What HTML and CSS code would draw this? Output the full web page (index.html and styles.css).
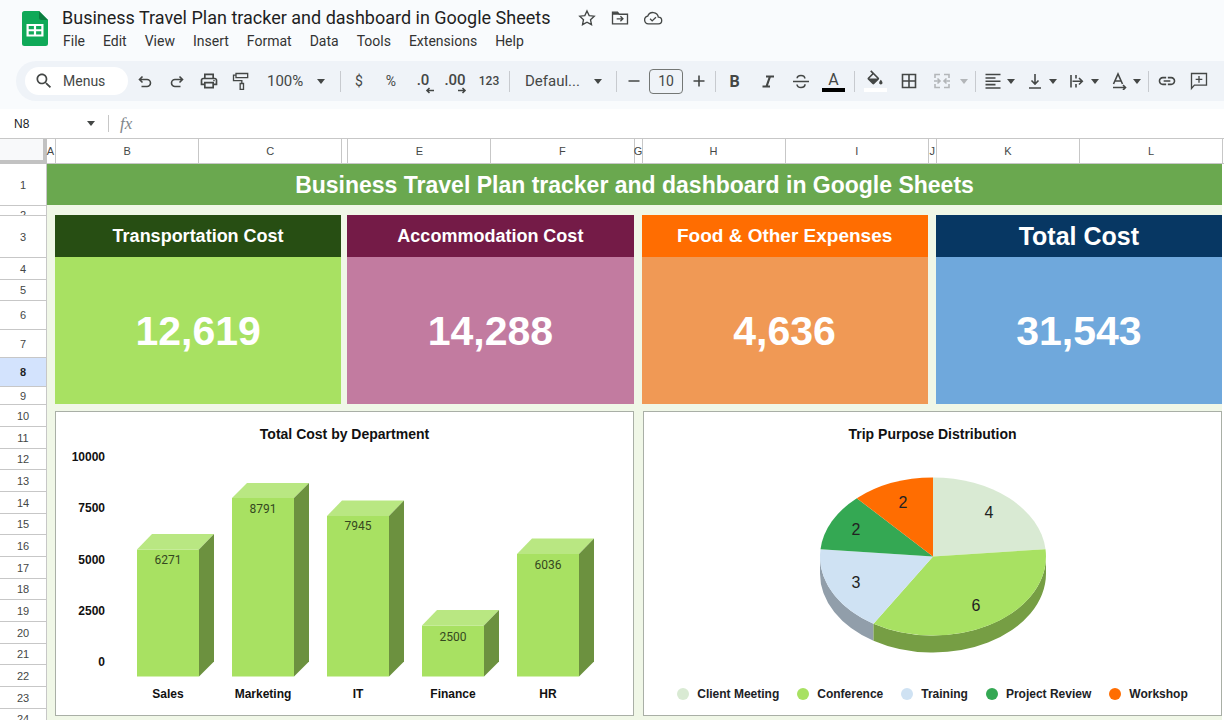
FILE: index.html
```html
<!DOCTYPE html>
<html lang="en">
<head>
<meta charset="utf-8">
<title>Business Travel Plan tracker and dashboard in Google Sheets</title>
<link rel="stylesheet" href="styles.css">
</head>
<body>
<header class="app-header">
  <svg class="logo" viewBox="0 0 26 35" aria-label="Sheets"><path fill="#0fa958" d="M2.500 0H17L26 9v23.500A2.500 2.500 0 0 1 23.500 35h-21A2.500 2.500 0 0 1 0 32.500v-30A2.500 2.500 0 0 1 2.500 0z"/><path fill="#0b7d3f" d="M17 0l9 9h-6.500A2.500 2.500 0 0 1 17 6.500z"/><path fill="#fff" fill-rule="evenodd" d="M4.500 13h17v12.500h-17zM6.700 15v3.200h5.200V15zm7.400 0v3.200h5.200V15zm-7.400 5.300v3.200h5.200v-3.200zm7.400 0v3.200h5.200v-3.200z"/></svg>
  <div class="heading">
    <div class="title-row">
      <h1 class="doc-title">Business Travel Plan tracker and dashboard in Google Sheets</h1>
      <button class="title-btn" aria-label="Star"><svg class="icon" viewBox="0 0 24 24"><path class="line" d="M12 3.500l2.600 5.600 6.100.700-4.500 4.200 1.200 6L12 17l-5.400 3 1.200-6-4.500-4.200 6.100-.700z"/></svg></button>
      <button class="title-btn" aria-label="Move"><svg class="icon" viewBox="0 0 24 24"><path class="line" d="M3 5h6l2 2.500h10V19H3zM8 13h7M12.500 10l3 3-3 3"/><path d="M3 5h6l2 3H3z"/></svg></button>
      <button class="title-btn" aria-label="Cloud status"><svg class="icon" viewBox="0 0 24 24"><path class="line" d="M6.500 19A4.700 4.700 0 0 1 5.700 9.700 6.600 6.600 0 0 1 18.400 11 4 4 0 0 1 18.500 19zM8.500 13l2.500 2.500 4.500-4.500"/></svg></button>
    </div>
    <nav class="menu">
      <button>File</button><button>Edit</button><button>View</button><button>Insert</button><button>Format</button><button>Data</button><button>Tools</button><button>Extensions</button><button>Help</button>
    </nav>
  </div>
</header>

<div class="toolbar" role="toolbar">
  <button class="menus"><svg class="icon" viewBox="0 0 24 24"><path d="M15.500 14h-.790l-.280-.270C15.410 12.590 16 11.110 16 9.500 16 5.910 13.090 3 9.500 3S3 5.910 3 9.500 5.910 16 9.500 16c1.610 0 3.090-.590 4.230-1.570l.270.280v.790l5 4.990L20.490 19l-4.990-5zm-6 0C7.010 14 5 11.990 5 9.500S7.010 5 9.500 5 14 7.010 14 9.500 11.990 14 9.500 14z"/></svg>Menus</button>
  <button class="tool" aria-label="Undo"><svg class="icon small" viewBox="0 0 18 18"><path class="line" d="M6.500 4.500L3.500 7.500l3 3M4 7.500H11a3.500 3.500 0 0 1 0 7H5.500"/></svg></button>
  <button class="tool" aria-label="Redo"><svg class="icon small" viewBox="0 0 18 18"><path class="line" d="M11.500 4.500l3 3-3 3M14 7.500H7a3.500 3.500 0 0 0 0 7h5.500"/></svg></button>
  <button class="tool" aria-label="Print"><svg class="icon" viewBox="0 0 24 24"><path d="M19 8h-1V3H6v5H5c-1.660 0-3 1.340-3 3v6h4v4h12v-4h4v-6c0-1.660-1.340-3-3-3zM8 5h8v3H8V5zm8 12v2H8v-4h8v2zm2-2v-2H6v2H4v-4c0-.550.450-1 1-1h14c.550 0 1 .450 1 1v4h-2z"/><circle cx="18" cy="11.500" r="1"/></svg></button>
  <button class="tool" aria-label="Paint format"><svg class="icon" viewBox="0 0 24 24"><path class="line" d="M6 3h14v5H6zM6 5H3v6.500h10V15M11 15h4v7h-4z"/></svg></button>
  <button class="drop zoom">100%<i class="caret"></i></button>
  <span class="sep"></span>
  <button class="tool symbol">$</button>
  <button class="tool symbol">%</button>
  <button class="tool decimal" aria-label="Decrease decimal places">.0<svg viewBox="0 0 10 6"><path class="line" d="M9 3H2M4.500.500L2 3l2.500 2.500"/></svg></button>
  <button class="tool decimal" aria-label="Increase decimal places">.00<svg viewBox="0 0 10 6"><path class="line" d="M1 3h7M5.500.500L8 3 5.500 5.500"/></svg></button>
  <button class="tool formats">123</button>
  <span class="sep"></span>
  <button class="drop font">Defaul...<i class="caret"></i></button>
  <span class="sep"></span>
  <button class="step" aria-label="Decrease font size"><svg class="icon small" viewBox="0 0 18 18"><path class="line" d="M3.500 9h11"/></svg></button>
  <input class="size" aria-label="Font size" value="10">
  <button class="step" aria-label="Increase font size"><svg class="icon small" viewBox="0 0 18 18"><path class="line" d="M3.500 9h11M9 3.500v11"/></svg></button>
  <span class="sep"></span>
  <button class="tool style bold">B</button>
  <button class="tool style" aria-label="Italic"><svg class="icon small" viewBox="0 0 18 18"><path class="heavy" d="M7 4.500h8M3.500 14.500h7.500M11 4.500L7.500 14.500"/></svg></button>
  <button class="tool style" aria-label="Strikethrough"><svg class="icon small" viewBox="0 0 18 18"><path class="line" d="M1 9.500h16M12.800 6.500C12.800 4.700 11.400 3.500 9 3.500S5.200 4.700 5.200 6.300M5 12.500c.200 1.800 1.600 3 4 3s4-1.200 4-3.200"/></svg></button>
  <button class="tool style color"><span>A</span><i class="swatch black"></i></button>
  <span class="sep wide"></span>
  <button class="tool color" aria-label="Fill color"><svg class="icon" viewBox="0 0 24 21"><path d="M16.560 8.940L7.620 0 6.210 1.410l2.380 2.380-5.150 5.150c-.590.590-.590 1.540 0 2.120l5.500 5.500c.290.290.680.440 1.060.440s.770-.150 1.060-.440l5.500-5.500c.590-.580.590-1.530 0-2.120zM10 5.210L14.790 10H5.210zM19 11.500s-2 2.170-2 3.500c0 1.100.900 2 2 2s2-.900 2-2c0-1.330-2-3.500-2-3.500z"/></svg><i class="swatch white"></i></button>
  <button class="tool borders" aria-label="Borders"><svg class="icon small" viewBox="0 0 18 18"><path class="line" d="M2.500 2.500h13v13h-13zM9 2.500v13M2.500 9h13"/></svg></button>
  <button class="tool merge" aria-label="Merge cells"><svg class="icon small" viewBox="0 0 18 18"><path class="line" d="M7 2.500H2V6M11 2.500h5V6M7 15.500H2V12M11 15.500h5V12M1 9h5.500M4.500 6.500L7 9l-2.500 2.500M17 9h-5.500M13.500 6.500L11 9l2.500 2.500"/></svg><i class="caret"></i></button>
  <span class="sep"></span>
  <button class="split" aria-label="Horizontal align"><svg class="icon small" viewBox="0 0 18 18"><path class="line" d="M1.500 2.500h15M1.500 6h10M1.500 9.300h15M1.500 12.600h10M1.500 16h15"/></svg><i class="caret"></i></button>
  <button class="split" aria-label="Vertical align"><svg class="icon small" viewBox="0 0 18 18"><path class="line" d="M3 16h12M9 2v9.500M5.500 8.500L9 12l3.500-3.500"/></svg><i class="caret"></i></button>
  <button class="split" aria-label="Text wrapping"><svg class="icon small" viewBox="0 0 18 18"><path class="line" d="M3 3v12.500M8 3v3.500M8 12v3.500M4.500 9.200H14M11 6l3.300 3.200L11 12.500"/></svg><i class="caret"></i></button>
  <button class="split" aria-label="Text rotation"><svg class="icon small" viewBox="0 0 18 18"><path class="line" d="M3.500 12L8 2l4.500 10M5 9h6M3 15.500h12.500M13 13l2.500 2.500L13 18"/></svg><i class="caret"></i></button>
  <span class="sep"></span>
  <button class="tool" aria-label="Insert link"><svg class="icon" viewBox="0 0 24 24"><path d="M3.900 12c0-1.710 1.390-3.100 3.100-3.100h4V7H7c-2.760 0-5 2.240-5 5s2.240 5 5 5h4v-1.900H7c-1.710 0-3.100-1.390-3.100-3.100zM8 13h8v-2H8v2zm9-6h-4v1.900h4c1.710 0 3.100 1.390 3.100 3.100s-1.390 3.100-3.100 3.100h-4V17h4c2.760 0 5-2.240 5-5s-2.240-5-5-5z"/></svg></button>
  <button class="tool" aria-label="Insert comment"><svg class="icon" viewBox="0 0 24 24"><path class="line" d="M3 21V3h18v14H6.500zM12 6v8M8 10h8"/></svg></button>
</div>

<div class="formula-bar">
  <input class="name-box" aria-label="Name box" value="N8">
  <i class="caret"></i>
  <span class="divider"></span>
  <label class="fx" for="formula">fx</label>
  <input class="formula" id="formula">
</div>

<main class="sheet">
<table class="grid">
  <colgroup><col class="c-head"><col class="c-gap"><col><col><col class="c-thin"><col><col><col class="c-gap"><col><col><col class="c-gap"><col><col><col class="c-rest"></colgroup>
  <thead><tr><td class="corner"></td><th><span>A</span></th><th>B</th><th>C</th><th></th><th>E</th><th>F</th><th><span>G</span></th><th>H</th><th>I</th><th><span>J</span></th><th>K</th><th>L</th><th></th></tr></thead>
  <tbody>
    <tr class="r1"><th>1</th><td class="banner" colspan="12">Business Travel Plan tracker and dashboard in Google Sheets</td><td></td></tr>
    <tr class="r2"><th><div>2</div></th><td class="pale" colspan="12"></td><td></td></tr>
    <tr class="r3"><th>3</th><td class="pale" rowspan="7"></td><td class="label transport" colspan="2">Transportation Cost</td><td class="pale" rowspan="7"></td><td class="label lodging" colspan="2">Accommodation Cost</td><td class="pale" rowspan="7"></td><td class="label food" colspan="2">Food &amp; Other Expenses</td><td class="pale" rowspan="7"></td><td class="label total" colspan="2">Total Cost</td><td></td></tr>
    <tr class="r4"><th>4</th><td class="amount transport" colspan="2" rowspan="6">12,619</td><td class="amount lodging" colspan="2" rowspan="6">14,288</td><td class="amount food" colspan="2" rowspan="6">4,636</td><td class="amount total" colspan="2" rowspan="6">31,543</td><td></td></tr>
    <tr class="r5"><th>5</th><td></td></tr>
    <tr class="r6"><th>6</th><td></td></tr>
    <tr class="r7"><th>7</th><td></td></tr>
    <tr class="r8"><th class="selected">8</th><td></td></tr>
    <tr class="r9"><th>9</th><td></td></tr>
  </tbody>
  <tbody class="lower">
    <tr><th>10</th><td class="charts pale" colspan="12" rowspan="15">
      <div class="chart-row">
        <section class="panel">
          <h2>Total Cost by Department</h2>
          <svg class="plot" viewBox="0 0 577 271" role="img" aria-label="Total cost by department">
            <g class="front"><path d="M81 105.500h62v127H81z"/><path d="M176 54h62v178.500h-62z"/><path d="M271 72h62v160.500h-62z"/><path d="M366 181.500h62v51h-62z"/><path d="M461 110h62v122.500h-62z"/></g>
            <g class="top"><path d="M81 105.500l15-15.500h62l-15 15.500z"/><path d="M176 54l15-15h62l-15 15z"/><path d="M271 72l15-15.500h62L333 72z"/><path d="M366 181.500l15-15.500h62l-15 15.500z"/><path d="M461 110l15-15.500h62L523 110z"/></g>
            <g class="side"><path d="M143 105.500L158 90v127.500l-15 15z"/><path d="M238 54l15-15v178.500l-15 15z"/><path d="M333 72l15-15.500v161l-15 15z"/><path d="M428 181.500l15-15.500v51.500l-15 15z"/><path d="M523 110l15-15.500v123l-15 15z"/></g>
            <g class="value"><text x="112" y="120">6271</text><text x="207" y="69">8791</text><text x="302" y="86">7945</text><text x="397" y="197">2500</text><text x="492" y="125">6036</text></g>
            <g class="axis"><text x="49" y="17">10000</text><text x="49" y="68">7500</text><text x="49" y="120">5000</text><text x="49" y="171">2500</text><text x="49" y="222">0</text></g>
            <g class="category"><text x="112" y="254">Sales</text><text x="207" y="254">Marketing</text><text x="302" y="254">IT</text><text x="397" y="254">Finance</text><text x="492" y="254">HR</text></g>
          </svg>
        </section>
        <section class="panel">
          <h2>Trip Purpose Distribution</h2>
          <svg class="plot" viewBox="0 0 577 240" role="img" aria-label="Trip purpose distribution">
            <path fill="#919eaa" d="M229.500 179.700A113 79 0 0 1 176 112.500v17A113 79 0 0 0 229.500 196.700z"/>
            <path fill="#769e44" d="M402 112.500A113 79 0 0 1 229.500 179.700v17A113 79 0 0 0 402 129.500z"/>
            <path fill="#d9ead3" d="M289 112.500v-79A113 79 0 0 1 401.500 105.200z"/>
            <path fill="#a8e162" d="M289 112.500L401.500 105.200A113 79 0 0 1 229.500 179.700z"/>
            <path fill="#cfe2f3" d="M289 112.500L229.500 179.700A113 79 0 0 1 176.500 105.200z"/>
            <path fill="#34a853" d="M289 112.500L176.500 105.200A113 79 0 0 1 212.800 54.200z"/>
            <path fill="#ff6d01" d="M289 112.500L212.800 54.200A113 79 0 0 1 289 33.500z"/>
            <g class="slice"><text x="345" y="74">4</text><text x="332" y="167">6</text><text x="212" y="144">3</text><text x="212" y="91">2</text><text x="259" y="64">2</text></g>
          </svg>
          <ul class="legend"><li><i class="dot client"></i>Client Meeting</li><li><i class="dot conference"></i>Conference</li><li><i class="dot training"></i>Training</li><li><i class="dot review"></i>Project Review</li><li><i class="dot workshop"></i>Workshop</li></ul>
        </section>
      </div>
    </td><td></td></tr>
    <tr><th>11</th><td></td></tr><tr><th>12</th><td></td></tr><tr><th>13</th><td></td></tr><tr><th>14</th><td></td></tr><tr><th>15</th><td></td></tr><tr><th>16</th><td></td></tr><tr><th>17</th><td></td></tr><tr><th>18</th><td></td></tr><tr><th>19</th><td></td></tr><tr><th>20</th><td></td></tr><tr><th>21</th><td></td></tr><tr><th>22</th><td></td></tr><tr><th>23</th><td></td></tr><tr><th>24</th><td></td></tr>
  </tbody>
</table>
</main>
</body>
</html>
```
FILE: styles.css
```css
* { box-sizing: border-box; }
body {
  margin: 0;
  height: 100vh;
  display: flex;
  flex-direction: column;
  overflow: hidden;
  background: #f9fbfd;
  color: #202124;
  font-family: "Liberation Sans", Arial, sans-serif;
}
button, input { font: inherit; color: inherit; border: 0; background: none; padding: 0; margin: 0; }
button { display: flex; align-items: center; justify-content: center; flex: none; white-space: nowrap; }

.icon { width: 20px; height: 20px; fill: #444746; flex: none; }
.small { width: 18px; height: 18px; }
.line { fill: none; stroke: currentColor; stroke-width: 1.6; }
.heavy { fill: none; stroke: currentColor; stroke-width: 2.2; }
.caret { border: 4px solid transparent; border-top: 5px solid currentColor; border-bottom: 0; flex: none; }

/* Header */
.app-header { display: flex; gap: 14px; padding: 7px 16px 8px 22px; color: #444746; }
.logo { width: 26px; height: 35px; margin-top: 4px; flex: none; }
.title-row { display: flex; align-items: center; height: 22px; gap: 13px; }
.doc-title { margin: 0 14px 0 0; font: 400 18px/22px Roboto, sans-serif; color: #1f1f1f; white-space: nowrap; }
.menu { display: flex; gap: 18px; height: 24px; padding-left: 1px; font: 14px/24px Roboto, sans-serif; color: #333; }

/* Toolbar */
.toolbar {
  display: flex;
  align-items: center;
  flex: none;
  height: 40px;
  margin-left: 16px;
  padding-left: 9px;
  border-radius: 20px 0 0 20px;
  background: #eff3f8;
  color: #444746;
  font-family: Roboto, sans-serif;
  overflow: hidden;
}
.menus { justify-content: flex-start; width: 103px; height: 28px; gap: 9px; margin-right: 1px; padding-left: 9px; border-radius: 14px; background: #fff; font-size: 14px; }
.tool { width: 32px; height: 30px; font-size: 14px; }
.sep { width: 1px; height: 21px; margin: 0 2px; background: #c7cacf; flex: none; }
.sep.wide { margin: 0 4px; }
.drop { justify-content: space-between; font-size: 15px; height: 30px; }
.zoom { width: 81px; padding: 0 13px 0 10px; }
.font { width: 102px; padding: 0 12px 0 13px; }
.decimal { position: relative; font-weight: 500; font-size: 15px; padding-bottom: 3px; }
.decimal svg { position: absolute; right: 4px; bottom: 2px; width: 10px; height: 7px; }
.formats { width: 36px; font-size: 12px; font-weight: 500; }
.step { width: 29px; height: 30px; }
.size { width: 34px; height: 25px; border: 1px solid #747775; border-radius: 4px; text-align: center; font-size: 14px; margin: 0 1px; }
.style { width: 33px; }
.bold { font-size: 16px; font-weight: 700; }
.color { flex-direction: column; justify-content: flex-end; height: 29px; padding-bottom: 4px; font-size: 16px; line-height: 16px; }
.color .icon { height: 18px; }
.swatch { width: 23px; height: 4px; flex: none; }
.black { background: #000; }
.white { background: #fff; }
.borders { width: 36px; }
.merge { width: 46px; gap: 9px; color: #b3b6b9; }
.split { width: 42px; gap: 5px; height: 30px; }

/* Formula bar */
.formula-bar { display: flex; align-items: center; flex: none; height: 30px; margin-top: 8px; padding-left: 14px; border-bottom: 1px solid #c7c7c7; background: #fff; color: #444746; }
.name-box { width: 73px; font-size: 12px; color: #202124; }
.divider { width: 1px; height: 17px; margin: 0 11px 0 13px; background: #c7c7c7; }
.fx { font: italic 17px "Liberation Serif", serif; color: #80868b; }
.formula { flex: 1; min-width: 0; margin-left: 8px; }

/* Sheet */
.sheet { flex: 1; min-height: 0; overflow: hidden; background: #fff; }
.grid { width: 100%; table-layout: fixed; border-collapse: separate; border-spacing: 0; }
.grid td { padding: 0; }
.grid th { padding: 0; font-size: 11px; line-height: 12px; font-weight: 400; color: #444746; background: #fff; }
.c-head { width: 47px; }
.c-gap { width: 8px; }
.c-thin { width: 6px; }
.c-rest { width: 2px; }
thead tr { height: 25px; }
thead th { border-left: 1px solid #c7c7c7; border-bottom: 1px solid #c7c7c7; }
thead th:nth-child(2) { border-left: 0; }
thead th span { display: flex; justify-content: center; width: 7px; }
.grid .corner { background: #f8f9fa; border-right: 4px solid #c2c2c2; border-bottom: 4px solid #c2c2c2; }
tbody th { border-top: 1px solid #c7c7c7; border-right: 1px solid #c7c7c7; }
.r1 { height: 41px; }
.r1 th { border-top: 0; }
.r2 { height: 10px; }
.r2 div { height: 9px; padding-top: 3px; overflow: hidden; }
.r3 { height: 42px; }
.r4 { height: 22px; }
.r5 { height: 21px; }
.r6 { height: 29px; }
.r7 { height: 28px; }
.r8 { height: 29px; }
.r9 { height: 18px; }
.lower tr { height: 22px; }
.lower tr:nth-child(3n) { height: 21px; }
.grid .selected { background: #d3e3fd; font-weight: 700; color: #1f1f1f; }
.pale { background: #f0f7e7; }
.banner, .label, .amount { text-align: center; font-weight: 700; color: #fff; white-space: nowrap; }
.banner { background: #6aa84f; font-size: 23px; line-height: 28px; }
.label { font-size: 18px; line-height: 28px; }
.amount { font-size: 41px; line-height: 48px; }
.label.total { font-size: 25px; background: #073763; }
.label.transport { background: #274e13; }
.label.lodging { background: #741b47; }
.label.food { font-size: 19px; background: #ff6d01; }
.amount.transport { background: #a8e162; }
.amount.lodging { background: #c27ba0; }
.amount.food { background: #f09955; }
.amount.total { background: #6fa8dc; }

/* Charts */
.grid .charts { padding: 7px 0 0 8px; vertical-align: top; }
.chart-row { display: grid; grid-template-columns: 1fr 1fr; gap: 9px; }
.panel { border: 1px solid #a9afa6; background: #fff; }
.panel h2 { margin: 0; padding-top: 12px; font-size: 14px; line-height: 20px; text-align: center; color: #111; }
.plot { display: block; width: 100%; height: auto; }
.front { fill: #a8e162; }
.top { fill: #b9e782; }
.side { fill: #6c913f; }
.value { font: 12px Roboto, sans-serif; fill: #35481f; text-anchor: middle; }
.axis { font-size: 12px; font-weight: 700; text-anchor: end; fill: #111; }
.category { font-size: 12px; font-weight: 700; text-anchor: middle; fill: #111; }
.slice { font-size: 16px; text-anchor: middle; fill: #222; }
.legend { display: flex; justify-content: center; gap: 18px; margin: 0; padding: 0; list-style: none; font-size: 12px; line-height: 20px; font-weight: 700; white-space: nowrap; }
.legend li { display: flex; align-items: center; gap: 8px; }
.dot { width: 12px; height: 12px; border-radius: 50%; }
.client { background: #d9ead3; }
.conference { background: #a8e162; }
.training { background: #cfe2f3; }
.review { background: #34a853; }
.workshop { background: #ff6d01; }
```
